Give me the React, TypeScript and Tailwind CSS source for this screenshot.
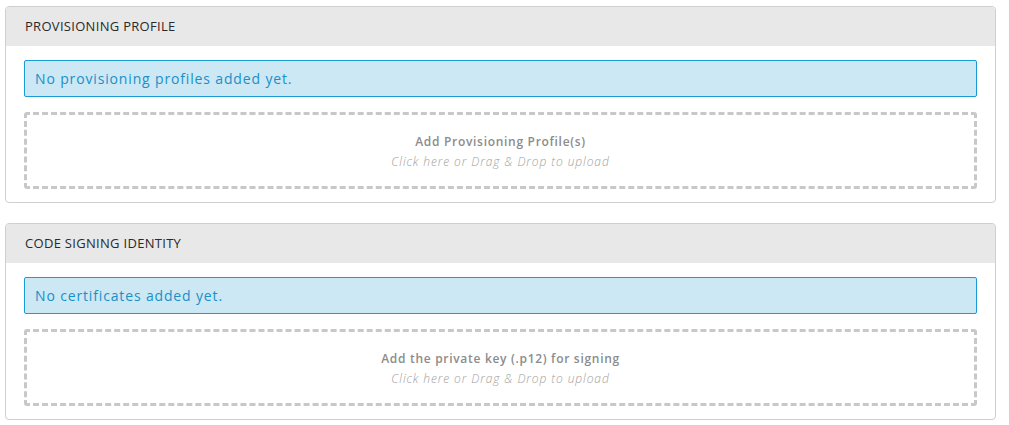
const font = { fontFamily: '"Open Sans", "Liberation Sans", sans-serif' }

interface UploadPanelProps {
  title: string
  emptyText: string
  dropLabel: string
}

function UploadPanel({ title, emptyText, dropLabel }: UploadPanelProps) {
  return (
    <section className="overflow-hidden rounded-[4px] border border-[#cfcfcf] bg-white">
      <header className="flex h-[39px] items-center bg-[#e8e8e8] px-[19px]">
        <h2 className="text-[13px] tracking-[0.3px] text-[#2a2a2a]">{title}</h2>
      </header>
      <div className="flex flex-col gap-[15px] px-[18px] pt-[14px] pb-[13px]">
        <div className="flex h-[37px] items-center rounded-[2px] border border-[#1b9ad6] bg-[#cce8f4] px-[10px]">
          <p className="text-[14px] tracking-[0.85px] text-[#1a8fc9]">{emptyText}</p>
        </div>
        <button className="flex h-[77px] flex-col items-center justify-center gap-[2px] rounded-[3px] border-[3px] border-dashed border-[#c8c8c8] bg-white pt-[2px]">
          <span className="text-[12px] font-semibold tracking-[0.7px] text-[#8c8c8c]">{dropLabel}</span>
          <span className="text-[12px] font-light italic tracking-[0.9px] text-[#9e9e9e]">
            Click here or Drag &amp; Drop to upload
          </span>
        </button>
      </div>
    </section>
  )
}

export default function App() {
  return (
    <div className="flex min-h-[425px] w-[1009px] flex-col gap-[20px] bg-white pt-[6px] pr-[13px] pl-[5px]" style={font}>
      <UploadPanel
        title="PROVISIONING PROFILE"
        emptyText="No provisioning profiles added yet."
        dropLabel="Add Provisioning Profile(s)"
      />
      <UploadPanel
        title="CODE SIGNING IDENTITY"
        emptyText="No certificates added yet."
        dropLabel="Add the private key (.p12) for signing"
      />
    </div>
  )
}
